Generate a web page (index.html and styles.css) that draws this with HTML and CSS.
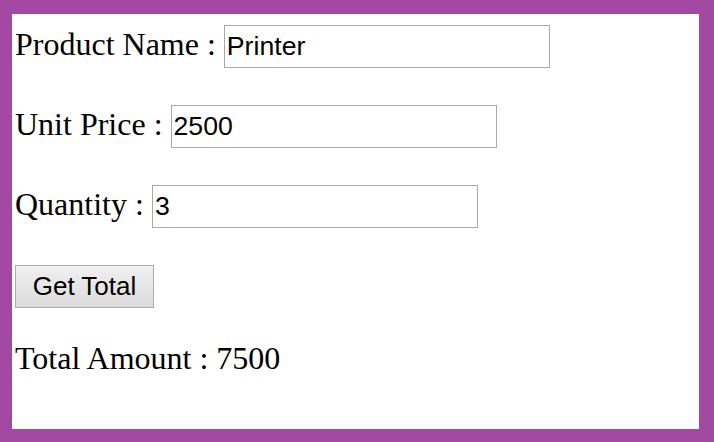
FILE: index.html
```html
<!DOCTYPE html>
<html>
<head>
<meta charset="utf-8">
<title>Total</title>
<link rel="stylesheet" href="styles.css">
</head>
<body>
<div class="frame">
  <div class="row"><span class="label">Product Name :</span><input class="field" type="text" value="Printer"></div>
  <div class="row"><span class="label">Unit Price :</span><input class="field" type="text" value="2500"></div>
  <div class="row"><span class="label">Quantity :</span><input class="field" type="text" value="3"></div>
  <div class="row"><button class="btn" type="button">Get Total</button></div>
  <p class="total">Total Amount : 7500</p>
</div>
</body>
</html>
```

FILE: styles.css
```css
html, body {
  margin: 0;
  padding: 0;
  background: #a349a4;
  height: 100%;
}
.frame {
  box-sizing: border-box;
  margin: 14px 15px 0 12px;
  height: 415px;
  background: #ffffff;
  padding: 11px 0 0 3px;
  font-family: "Liberation Serif", "Times New Roman", serif;
  font-size: 32px;
  color: #000;
}
.row {
  display: flex;
  align-items: baseline;
  height: 43px;
  margin-bottom: 37px;
}
.label {
  white-space: pre;
}
.label::after {
  content: " ";
}
.field {
  box-sizing: border-box;
  width: 326px;
  height: 43px;
  margin: 0;
  padding: 0 2px;
  border: 1px solid #a9a9a9;
  border-radius: 0;
  font-family: "Liberation Sans", Arial, sans-serif;
  font-size: 26.67px;
  color: #000;
  background: #fff;
  outline: none;
}
.btn {
  box-sizing: border-box;
  width: 139px;
  height: 43px;
  margin: 0;
  padding: 0;
  border: 1px solid #acacac;
  border-radius: 0;
  background: linear-gradient(#f0f0f0, #dcdcdc);
  font-family: "Liberation Sans", Arial, sans-serif;
  font-size: 26px;
  color: #000;
}
.total {
  margin: 0;
  line-height: 37px;
  padding-top: 32px;
}
.row:nth-child(4) {
  margin-bottom: 0;
}
```
